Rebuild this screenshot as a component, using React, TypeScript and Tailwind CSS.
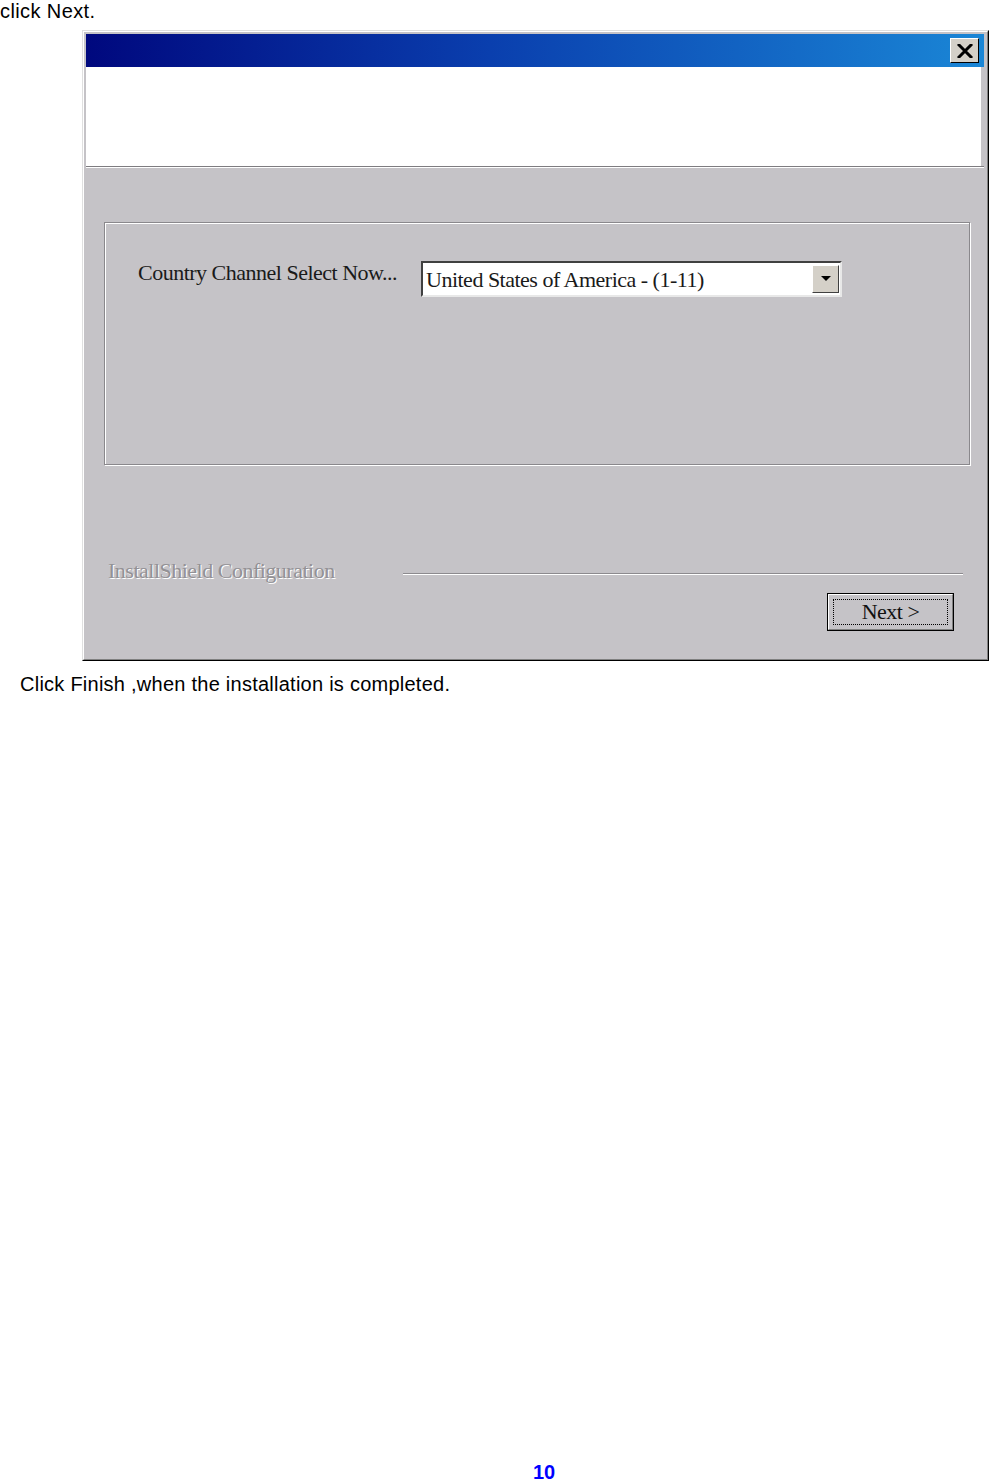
import React from "react";

const serif = { fontFamily: '"Liberation Serif", "Times New Roman", serif' };

function CloseIcon() {
  return (
    <svg width="16" height="14" viewBox="0 0 16 14">
      <path d="M2 1 L14 13 M14 1 L2 13" stroke="#000" strokeWidth="3" strokeLinecap="square" />
    </svg>
  );
}

function ArrowDown() {
  return (
    <svg width="10" height="6" viewBox="0 0 10 6">
      <path d="M0 0 H10 L5 5 Z" fill="#000" />
    </svg>
  );
}

export default function App() {
  return (
    <div
      className="relative h-[1484px] w-[989px] overflow-hidden bg-white text-black flex flex-col"
      style={{ fontFamily: '"Liberation Sans", Arial, sans-serif' }}
    >
      <div className="text-[20px] leading-[23px] tracking-[0.4px]">click Next.</div>

      {/* Dialog screenshot */}
      <div className="ml-[82px] mt-[7px] w-[907px] h-[631px] border border-t-[#e0e0e0] border-l-[#e0e0e0] border-r-black border-b-black bg-[#c5c3c7]">
        <div className="h-full w-full border border-t-white border-l-white border-r-[#808080] border-b-[#808080] p-[2px] pr-[3px] flex flex-col">
          {/* title bar */}
          <div className="h-[33px] shrink-0 bg-[linear-gradient(to_right,#00087e,#0a3fae_45%,#1a86d6)] flex items-start justify-end pr-[5px] pt-[4px]">
            <div className="w-[29px] h-[25px] bg-[#d4d0c8] border border-t-white border-l-white border-r-black border-b-black flex items-center justify-center">
              <CloseIcon />
            </div>
          </div>
          {/* white header */}
          <div className="h-[99px] shrink-0 bg-white mr-[3px]" />
          <div className="h-px shrink-0 bg-[#7e7c80]" />
          <div className="h-px shrink-0 bg-white" />

          {/* body */}
          <div className="flex-1 flex flex-col" style={serif}>
            <div className="ml-[18px] mt-[54px] w-[866px] h-[243px] border border-[#8a888c] shadow-[inset_1px_1px_0_#ffffff,1px_1px_0_#ffffff]">
              <div className="mt-[38px] pl-[33px] flex items-start">
                <div className="w-[283px] text-[22px] leading-[24px] tracking-[-0.5px] text-[#1a1a1a]">
                  Country Channel Select Now...
                </div>
                <div className="w-[421px] h-[36px] border-2 border-t-[#404040] border-l-[#404040] border-r-[#e8e8e8] border-b-[#e8e8e8] bg-white flex items-center justify-between">
                  <div className="pl-[3px] pt-[2px] text-[22px] leading-[24px] tracking-[-0.5px] text-[#1a1a1a]">
                    United States of America - (1-11)
                  </div>
                  <div className="mr-[1px] w-[27px] h-[28px] bg-[#d4d0c8] border border-t-white border-l-white border-r-[#404040] border-b-[#404040] flex items-center justify-center">
                    <ArrowDown />
                  </div>
                </div>
              </div>
            </div>

            <div className="mt-[94px] pl-[22px] flex items-start">
              <div className="w-[295px] text-[22px] leading-[24px] tracking-[-0.5px] text-[#939195] [text-shadow:1px_1px_0_#ffffff]">
                InstallShield Configuration
              </div>
              <div className="mt-[14px] w-[560px] h-[2px] border-t border-t-[#8c8a8e] border-b border-b-white" />
            </div>

            <div className="mt-[10px] flex justify-end pr-[30px]">
              <div className="w-[127px] h-[38px] border border-black bg-[#c5c3c7]">
                <div className="h-full w-full border border-t-white border-l-white border-r-[#808080] border-b-[#808080] p-[4px] pt-[4px]">
                  <div className="h-full w-full border border-dotted border-black flex items-center justify-center text-[22px] leading-[24px] tracking-[-0.5px] text-[#111]">
                    Next &gt;
                  </div>
                </div>
              </div>
            </div>
          </div>
        </div>
      </div>

      <div className="ml-[20px] mt-[14px] text-[20px] leading-[18px] tracking-[0.25px]">
        Click Finish ,when the installation is completed.
      </div>

      <div className="mt-auto pl-[533px] text-[20px] leading-[23px] font-bold text-[#0000ff]">10</div>
    </div>
  );
}
